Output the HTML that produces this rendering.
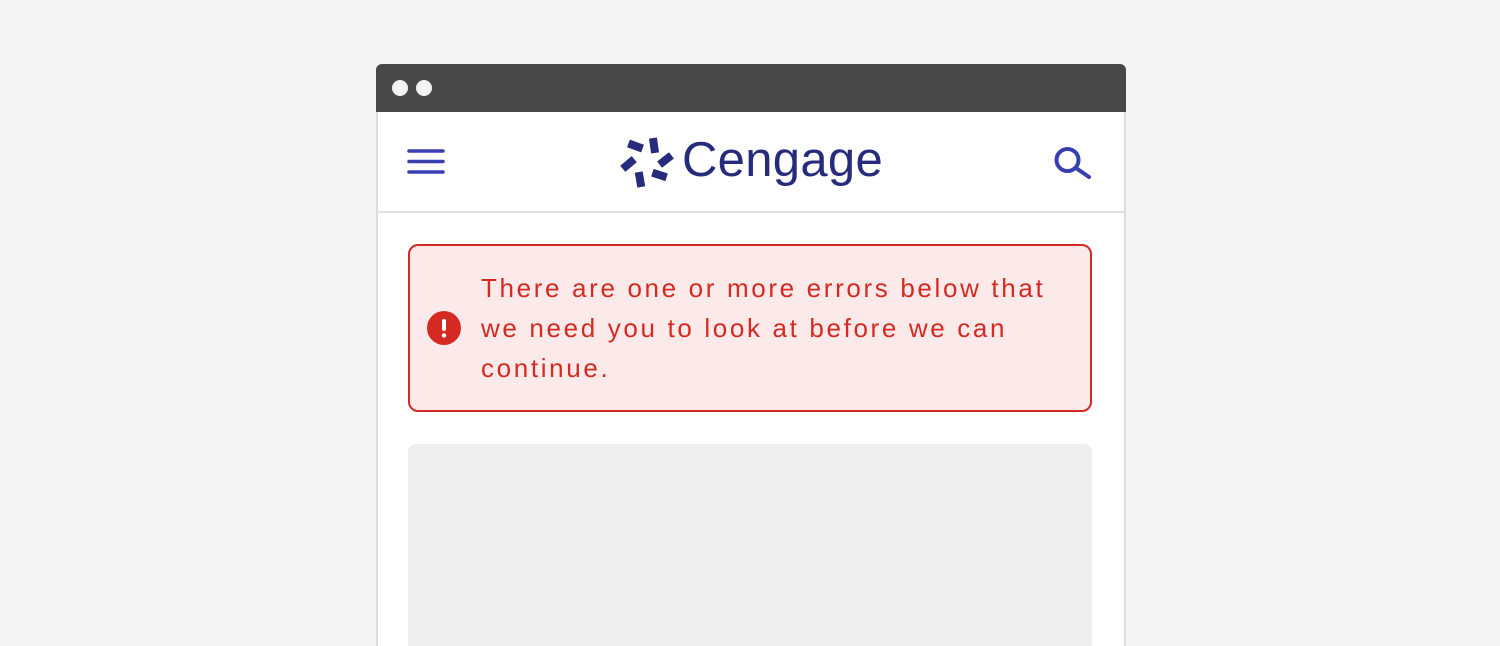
<!DOCTYPE html>
<html><head><meta charset="utf-8"><style>
html,body{margin:0;padding:0;overflow:hidden;}
body{width:1500px;height:646px;background:#f4f4f4;position:relative;overflow:hidden;font-family:"Liberation Sans",sans-serif;}
.win{position:absolute;left:376px;top:64px;width:750px;height:582px;background:#fff;border-radius:6px 6px 0 0;overflow:hidden;}
.bar{position:absolute;left:0;top:0;width:750px;height:48px;background:#474747;}
.dot{position:absolute;top:16px;width:16px;height:16px;border-radius:50%;background:#f4f4f4;}
.side{position:absolute;top:48px;width:2px;height:534px;background:#dcdcdc;}
.hdr{position:absolute;left:0;top:147px;width:750px;height:2px;background:#e0e0e0;}
.err{position:absolute;left:32px;top:180px;width:684px;height:168px;box-sizing:border-box;border:2px solid #d42a22;border-radius:10px;background:#fce9ea;}
.msg{position:absolute;left:71px;top:22px;color:#d42a22;font-size:26px;line-height:40px;letter-spacing:2.65px;white-space:nowrap;}
.gray{position:absolute;left:32px;top:380px;width:684px;height:202px;background:#eeeeee;border-radius:8px 8px 0 0;}
.logo{position:absolute;left:682px;top:132px;font-size:49px;color:#272b7c;letter-spacing:0.3px;line-height:56px;}
</style></head><body>
<div class="win">
 <div class="bar"></div>
 <div class="dot" style="left:16px"></div>
 <div class="dot" style="left:40px"></div>
 <div class="side" style="left:0"></div>
 <div class="side" style="left:748px"></div>
 <div class="hdr"></div>
 <div class="err">
  <svg style="position:absolute;left:16px;top:64px" width="36" height="36" viewBox="0 0 36 36"><circle cx="18" cy="18" r="17" fill="#d42a22"/><rect x="16" y="9" width="4" height="12" rx="2" fill="#fff"/><circle cx="18" cy="25.5" r="2.2" fill="#fff"/></svg>
  <div class="msg">There are one or more errors below that<br>we need you to look at before we can<br>continue.</div>
 </div>
 <div class="gray"></div>
</div>
<svg style="position:absolute;left:406px;top:148px" width="40" height="30"><g stroke="#3a3fb0" stroke-width="3.5" stroke-linecap="round"><line x1="3" y1="3" x2="37" y2="3"/><line x1="3" y1="13.5" x2="37" y2="13.5"/><line x1="3" y1="24" x2="37" y2="24"/></g></svg>
<svg style="position:absolute;left:1050px;top:140px" width="50" height="46"><circle cx="17.5" cy="20" r="11" fill="none" stroke="#3a3fb0" stroke-width="4"/><line x1="26" y1="28" x2="39" y2="37" stroke="#3a3fb0" stroke-width="4" stroke-linecap="round"/></svg>
<svg style="position:absolute;left:615px;top:132px" width="65" height="60" viewBox="615 132 65 60"><g fill="#272b7c">
<rect x="628" y="142" width="15" height="8" transform="rotate(20 635.5 146)"/>
<rect x="650" y="138" width="8" height="15" transform="rotate(-8 654 145.5)"/>
<rect x="658" y="156" width="15" height="8" transform="rotate(-38 665.5 160)"/>
<rect x="652" y="171" width="15" height="8" transform="rotate(18 659.5 175)"/>
<rect x="636" y="172" width="8" height="15" transform="rotate(-10 640 179.5)"/>
<rect x="621" y="160" width="15" height="8" transform="rotate(-40 628.5 164)"/>
</g></svg>
<div class="logo">Cengage</div>
</body></html>
